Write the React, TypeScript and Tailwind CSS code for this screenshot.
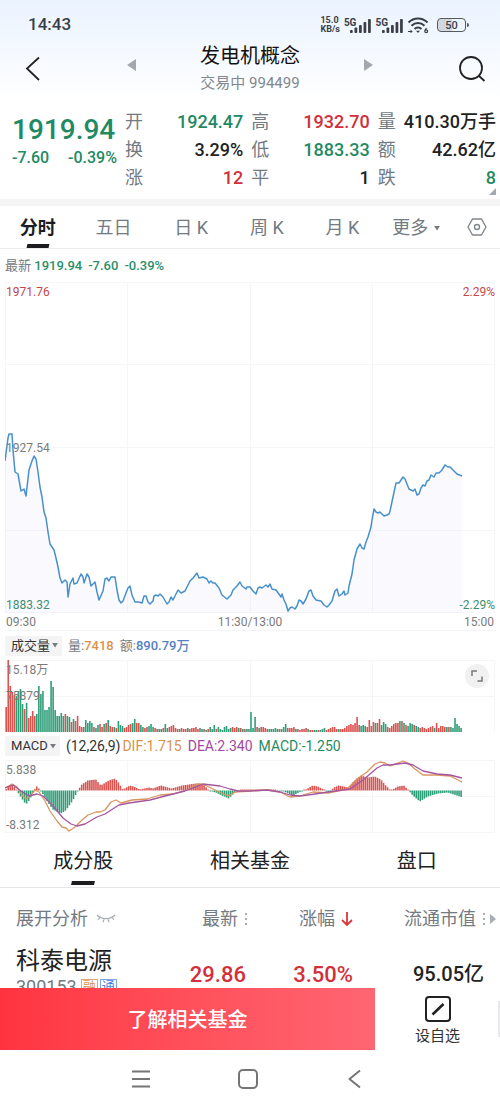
import { ReactNode } from 'react';

const RED = '#d9534f';
const GREEN = '#2f9e78';

const PRICE: [number, number][] = [
  [0, 179], [3, 156], [4, 152], [7, 152], [8, 168], [10, 190], [13, 192], [16, 209], [19, 207], [21, 214],
  [24, 188], [27, 179], [29, 174], [31, 177], [33, 190], [35, 205], [37, 215], [39, 230], [41, 236], [43, 250],
  [45, 262], [47, 265], [49, 268], [51, 276], [53, 285], [55, 296], [57, 301], [60, 298], [62, 300], [63, 315],
  [65, 302], [68, 296], [69, 302], [72, 301], [76, 292], [78, 295], [79, 301], [82, 292], [84, 295], [86, 304],
  [90, 300], [92, 310], [94, 318], [98, 309], [100, 297], [102, 296], [104, 299], [106, 295], [110, 295], [112, 308],
  [114, 318], [116, 321], [118, 319], [121, 311], [123, 306], [125, 304], [127, 313], [130, 320], [134, 320], [137, 321],
  [139, 314], [141, 314], [143, 320], [145, 322], [148, 319], [149, 314], [151, 313], [153, 314], [155, 312], [158, 315],
  [162, 322], [164, 320], [166, 315], [168, 318], [171, 312], [173, 308], [176, 311], [180, 309], [185, 299], [188, 296],
  [192, 291], [194, 296], [198, 295], [202, 297], [204, 301], [206, 299], [208, 301], [210, 301], [214, 306], [217, 313],
  [222, 317], [226, 313], [228, 308], [232, 304], [235, 300], [237, 304], [241, 307], [242, 305], [245, 305], [248, 309],
  [251, 312], [253, 306], [255, 305], [257, 306], [261, 303], [263, 305], [265, 302], [267, 307], [271, 308], [276, 315],
  [277, 312], [279, 318], [281, 322], [283, 329], [285, 326], [287, 325], [290, 327], [292, 324], [294, 318], [296, 319],
  [298, 322], [301, 317], [304, 309], [306, 308], [308, 314], [311, 318], [316, 319], [319, 323], [322, 325], [324, 323],
  [327, 319], [330, 309], [332, 307], [334, 314], [337, 312], [339, 309], [340, 313], [343, 311], [344, 304], [347, 292],
  [349, 278], [352, 267], [355, 262], [357, 266], [359, 267], [361, 260], [363, 255], [366, 245], [367, 238], [369, 227],
  [371, 230], [373, 231], [375, 230], [379, 234], [382, 233], [384, 232], [385, 229], [388, 215], [391, 201], [394, 201],
  [396, 198], [398, 195], [400, 197], [402, 202], [404, 207], [408, 209], [410, 207], [412, 213], [414, 212], [416, 206],
  [418, 203], [420, 204], [422, 199], [424, 198], [426, 193], [429, 195], [431, 191], [434, 191], [437, 188], [440, 183],
  [443, 185], [445, 185], [449, 189], [452, 192], [457, 194],
];

// one bar per minute, negative = falling (green)
const VOLUME = [
  25, 72, 46, 40, 37, -36, -41, -43, -28, 23, -29, 14, 16, 21, 16, -18, -46, -38, -41, -22,
  -22, -25, -51, -45, -22, -16, -16, -19, -16, 18, -16, -15, 10, -13, 11, 16, 6, 5, -5, -12,
  -9, -11, -9, 5, -4, -7, 8, 5, -8, 9, -12, 6, 5, -5, 4, -11, -7, -6, 4, 5,
  7, 8, -9, -13, 9, 9, -7, -5, 4, 5, -6, -8, -5, 4, 3, -3, -3, 4, -8, -4,
  5, 6, 7, 4, 3, -3, 4, 3, 3, -4, 3, 4, 4, 5, 3, -4, -3, 3, -2, 3,
  -5, -3, -7, 3, -5, -3, -2, -5, -6, -3, -4, 5, 4, 5, -4, 4, -3, 3, -3, -3,
  -20, -4, -15, 5, -4, 5, 5, 4, 3, -3, -3, -3, -4, -3, 3, -3, -5, -8, 4, 4,
  4, 5, -3, 3, 2, 3, 3, 4, -3, 2, 2, -2, -2, 2, -2, -3, -4, 2, 3, 4,
  5, 5, 3, -3, 3, 3, 4, 6, 7, 8, 7, 9, 15, 7, -6, -7, -6, 5, 12, 6,
  10, -9, 9, 13, -7, -10, -8, 5, 4, 6, 8, 9, 9, -11, 11, -9, 7, -6, -9, -8,
  7, -6, -5, 4, 5, 4, 3, 4, 5, 6, -4, 9, 4, 6, 6, 5, -5, 5, -5, -4,
  -14, -8, -6, -4,
];

const HISTOGRAM: [number, number][] = [
  [0, 1], [6, 7], [11, 0], [14, -5], [20, -14], [24, -9], [28, 0], [31, 4], [35, 0], [41, -10], [47, -19],
  [55, -23], [60, -20], [67, -10], [72, 0], [76, 6], [82, 10], [90, 11], [95, 5], [103, 10], [109, 12],
  [112, 9], [117, 1], [124, 5], [128, 4], [134, 1], [143, 3], [147, 2], [155, 5], [166, 2], [176, 5],
  [190, 7], [198, 6], [203, 0], [210, -2], [216, -5], [223, -8], [228, -3], [233, 0], [245, 1], [270, 0],
  [278, -1], [287, -5], [295, -1], [300, 1], [307, 5], [312, 4], [318, 1], [323, -2], [328, 3], [333, 5],
  [343, 3], [348, 9], [355, 15], [362, 13], [369, 14], [375, 11], [380, 5], [385, 0], [392, 4], [398, 5],
  [402, 1], [407, -5], [414, -11], [422, -6], [432, -3], [442, -2], [448, -4], [457, -7],
];

const DIF: [number, number][] = [
  [0, 28], [7, 24], [12, 27], [17, 35], [21, 39], [26, 35], [30, 30], [34, 32], [40, 41], [45, 51], [52, 61],
  [57, 67], [61, 68], [64, 71], [70, 67], [77, 60], [83, 55], [91, 52], [95, 52], [100, 50], [106, 42],
  [111, 40], [116, 43], [127, 40], [142, 39], [155, 35], [168, 34], [182, 30], [192, 24], [197, 24], [202, 26],
  [212, 31], [223, 36], [230, 32], [245, 31], [262, 30], [275, 32], [285, 37], [295, 36], [308, 32], [323, 33],
  [342, 29], [352, 19], [362, 12], [370, 4], [375, 2], [380, 3], [385, 6], [398, 1], [403, 3], [410, 9],
  [418, 15], [432, 15], [445, 16], [457, 22],
];

const DEA: [number, number][] = [
  [0, 28], [8, 25], [16, 31], [24, 36], [32, 34], [38, 36], [48, 46], [58, 58], [66, 64], [72, 66], [80, 64],
  [92, 57], [100, 54], [114, 45], [124, 43], [145, 40], [160, 36], [180, 31], [198, 24], [215, 26], [225, 29],
  [233, 31], [245, 31], [262, 30], [275, 32], [285, 35], [295, 36], [310, 34], [323, 32], [345, 29], [358, 20],
  [372, 8], [378, 5], [385, 5], [400, 3], [408, 5], [418, 11], [432, 14], [445, 15], [457, 18],
];

const toPoints = (data: [number, number][]) => data.map((p) => p.join(',')).join(' ');

function valueAt(data: [number, number][], x: number) {
  const i = data.findIndex((p) => p[0] >= x);
  if (i <= 0) return data[0][1];
  const [x0, y0] = data[i - 1];
  const [x1, y1] = data[i];
  return y0 + ((x - x0) / (x1 - x0)) * (y1 - y0);
}

function Chart({ height, rows, className, children }: { height: number; rows: number[]; className: string; children: ReactNode }) {
  return (
    <svg viewBox={`0 0 490 ${height}`} preserveAspectRatio="none" className={`block w-full ${className}`}>
      <g stroke="#f6f6f8" strokeWidth="1">
        {rows.map((y) => (
          <line key={y} x1="0" x2="490" y1={y} y2={y} />
        ))}
        {[0.5, 122.5, 245.5, 367.5, 489.5].map((x) => (
          <line key={x} x1={x} x2={x} y1="0" y2={height} />
        ))}
      </g>
      {children}
    </svg>
  );
}

function StatusBar() {
  return (
    <div className="flex h-11 items-center justify-between pt-1.5 pl-7 pr-[31px] text-[#3a3f47]">
      <span className="text-[17px] font-medium">14:43</span>
      <div className="flex items-center gap-1">
        <span className="text-[9px] leading-[9px] font-bold">
          15.0
          <br />
          KB/s
        </span>
        <Signal />
        <Signal />
        <svg width="22" height="17" viewBox="0 0 22 17" fill="none" stroke="currentColor" strokeWidth="2">
          <path d="M1.500 5.500C7 .2 15 .2 20.500 5.500" />
          <path d="M4.500 8.800c3.800-3.600 9.200-3.600 13 0" />
          <path d="M7.500 12c2-1.900 5-1.900 7 0" />
          <path d="M11 16l-2-2.300h4z" fill="currentColor" stroke="none" />
          <path d="M1 14.500h4M3.500 12.800l1.500 1.700-1.500 1.500" strokeWidth="1" />
          <path d="M19.500 11l-1.600 2.500" strokeWidth="1.200" />
          <circle cx="19.200" cy="14.300" r="1.400" strokeWidth="1.200" />
        </svg>
        <div className="ml-1 flex items-center gap-px">
          <div className="flex h-[14px] w-[29px] items-center justify-center rounded-[4px] border-[1.5px] border-[#555a61] bg-linear-to-r from-[#d3d8df] from-50% to-transparent to-50% text-[11px] leading-none font-medium">
            50
          </div>
          <div className="h-1 w-0.5 rounded-r bg-[#555a61]" />
        </div>
      </div>
    </div>
  );
}

function Signal() {
  return (
    <div className="flex items-end">
      <span className="self-start text-[10px] leading-[9px] font-bold">5G</span>
      <svg viewBox="0 0 20 15" preserveAspectRatio="none" fill="currentColor" className="-ml-1.5 h-[15px] w-[21px]">
        <rect x="0" y="12" width="2.600" height="3" rx=".8" />
        <rect x="4.300" y="9.500" width="2.600" height="5.500" rx=".8" />
        <rect x="8.600" y="7" width="2.600" height="8" rx=".8" />
        <rect x="12.900" y="4" width="2.600" height="11" rx=".8" />
        <rect x="17.200" y="1" width="2.600" height="14" rx=".8" />
      </svg>
    </div>
  );
}

function TitleBar() {
  return (
    <div className="grid grid-cols-[1fr_auto_1fr]">
      <div className="flex items-center justify-between pl-6 pr-16">
        <button aria-label="返回">
          <svg width="18" height="26" viewBox="0 0 18 26" fill="none" stroke="#222" strokeWidth="1.800">
            <path d="M15 1.500L3 12.500l12 11.500" />
          </svg>
        </button>
        <button aria-label="上一个" className="mb-2">
          <svg width="9" height="12" viewBox="0 0 9 12" fill="#a3a8ae">
            <path d="M9 0v12L0 6z" />
          </svg>
        </button>
      </div>
      <div className="text-center">
        <h1 className="text-xl leading-6 text-[#111]">发电机概念</h1>
        <p className="mt-1 text-[15px] leading-[22px] text-[#81878f]">交易中 994499</p>
      </div>
      <div className="flex items-center justify-between pr-3.5 pl-16">
        <button aria-label="下一个" className="mb-2">
          <svg width="9" height="12" viewBox="0 0 9 12" fill="#a3a8ae">
            <path d="M0 0v12l9-6z" />
          </svg>
        </button>
        <button aria-label="搜索">
          <svg width="28" height="28" viewBox="0 0 28 28" fill="none" stroke="#222" strokeWidth="1.800">
            <circle cx="13" cy="13" r="11" />
            <path d="M20.500 20.500l6 5.500" />
          </svg>
        </button>
      </div>
    </div>
  );
}

const QUOTES = [
  { label: '开', value: '1924.47', color: 'text-[#1f8a63]' },
  { label: '高', value: '1932.70', color: 'text-[#d32f3a]' },
  { label: '量', value: '410.30万手', color: 'text-[#222]' },
  { label: '换', value: '3.29%', color: 'text-[#222]' },
  { label: '低', value: '1883.33', color: 'text-[#1f8a63]' },
  { label: '额', value: '42.62亿', color: 'text-[#222]' },
  { label: '涨', value: '12', color: 'text-[#d32f3a]' },
  { label: '平', value: '1', color: 'text-[#222]' },
  { label: '跌', value: '8', color: 'text-[#1f8a63]' },
];

function Quote() {
  return (
    <section className="relative flex gap-2 pt-3.5 pr-1 pb-[7px] pl-3">
      <div className="w-[105px] shrink-0 pt-1.5 font-medium text-[#1f8a63]">
        <p className="text-[28px] leading-8">1919.94</p>
        <p className="flex justify-between leading-6">
          <span>-7.60</span>
          <span>-0.39%</span>
        </p>
      </div>
      <dl className="grid flex-1 grid-cols-3 gap-x-2 text-lg leading-7">
        {QUOTES.map((q) => (
          <div key={q.label} className="flex justify-between whitespace-nowrap">
            <dt className="text-[#737a82]">{q.label}</dt>
            <dd className={`font-medium ${q.color}`}>{q.value}</dd>
          </div>
        ))}
      </dl>
      <svg width="7" height="7" viewBox="0 0 7 7" fill="#a3a8ae" className="absolute right-1 bottom-1">
        <path d="M7 0v7H0z" />
      </svg>
    </section>
  );
}

function Caret() {
  return (
    <svg width="6" height="5" viewBox="0 0 7 6" fill="#777c82">
      <path d="M0 0h7L3.500 5.500z" />
    </svg>
  );
}

function PeriodTabs() {
  return (
    <nav className="flex h-[43px] border-b border-[#ececee] text-lg text-[#737a82]">
      <div className="grid flex-1 grid-cols-6">
        <button className="relative pt-0.5 font-bold text-[#1d1d1f]">
          分时
          <span className="absolute bottom-0 left-1/2 h-1 w-[22px] -translate-x-1/2 -skew-x-12 bg-[#1d1d1f]" />
        </button>
        <button className="pt-0.5">五日</button>
        <button className="pt-0.5 pl-1">日 K</button>
        <button className="pt-0.5 pl-1">周 K</button>
        <button className="pt-0.5 pl-1">月 K</button>
        <button className="flex items-center justify-center gap-1.5 pt-0.5 whitespace-nowrap">
          更多 <Caret />
        </button>
      </div>
      <button aria-label="设置" className="flex w-[46px] items-center justify-center">
        <svg width="20" height="18" viewBox="0 0 20 18" fill="none" stroke="#81878f" strokeWidth="1.400">
          <path d="M5.500 1h9L19 9l-4.500 8h-9L1 9z" strokeLinejoin="round" />
          <circle cx="10" cy="9" r="2.500" />
        </svg>
      </button>
    </nav>
  );
}

function PricePanel() {
  return (
    <section className="px-[5px]">
      <p className="flex h-[33px] items-center gap-1.5 pt-px text-[13px] font-medium text-[#2b8f6b]">
        <span>
          <span className="font-normal text-[#737a82]">最新</span> 1919.94
        </span>
        <span>-7.60</span>
        <span>-0.39%</span>
      </p>
      <div className="relative text-xs leading-4">
        <Chart height={331} rows={[0.5, 82.5, 165.5, 248.5, 330.5]} className="h-[331px]">
          <polygon points={`0,331 ${toPoints(PRICE)} 457,331`} fill="#7f7ff0" fillOpacity="0.035" />
          <polyline points={toPoints(PRICE)} fill="none" stroke="#4890cc" strokeWidth="1.500" strokeLinejoin="round" />
        </Chart>
        <span className="absolute top-0.5 left-px text-[#c4474b]">1971.76</span>
        <span className="absolute top-0.5 right-0 text-[#c4474b]">2.29%</span>
        <span className="absolute top-1/2 left-px -translate-y-1/2 text-[#7b7b7b]">1927.54</span>
        <span className="absolute bottom-0 left-px text-[#3c8f6f]">1883.32</span>
        <span className="absolute right-0 bottom-0 text-[#3c8f6f]">-2.29%</span>
      </div>
      <div className="flex h-[18px] items-center justify-between border-b border-[#f4f4f6] px-px text-xs text-[#7b7b7b]">
        <span>09:30</span>
        <span>11:30/13:00</span>
        <span>15:00</span>
      </div>
    </section>
  );
}

function VolumePanel() {
  return (
    <section className="px-[5px]">
      <div className="flex h-[29px] items-center gap-1.5 text-[13px] text-[#737a82]">
        <button className="flex h-5 items-center gap-0.5 rounded-xs bg-[#f4f4f5] pr-1 pl-1.5 text-[#333]">
          成交量 <Caret />
        </button>
        <span>
          量:<span className="font-medium text-[#d9924e]">7418</span>
        </span>
        <span>
          额:<span className="font-medium text-[#5580c4]">890.79万</span>
        </span>
      </div>
      <div className="relative text-xs leading-4 text-[#7b7b7b]">
        <Chart height={72} rows={[0.5, 36.5]} className="h-[72px]">
          {VOLUME.map((v, i) => (
            <rect key={i} x={0.4 + i * 2.04} y={72 - Math.abs(v)} width="1.600" height={Math.abs(v)} fill={v > 0 ? RED : GREEN} />
          ))}
        </Chart>
        <span className="absolute top-0.5 left-px">15.18万</span>
        <span className="absolute top-1/2 left-px -translate-y-1/2">75879</span>
        <button aria-label="全屏" className="absolute top-1 right-1.5 flex h-6 w-6 items-center justify-center rounded-full bg-[#f1f1f2]">
          <svg width="12" height="12" viewBox="0 0 12 12" fill="none" stroke="#777" strokeWidth="1.500">
            <path d="M1 6V1h5M11 6.500V11H6.500" />
          </svg>
        </button>
      </div>
    </section>
  );
}

function MacdPanel() {
  return (
    <section className="px-[5px]">
      <div className="flex h-7 items-center gap-1.5 text-sm whitespace-nowrap">
        <button className="flex h-5 items-center gap-0.5 rounded-xs bg-[#f4f4f5] pr-1 pl-1.5 text-[13px] text-[#333]">
          MACD <Caret />
        </button>
        <span className="text-[#333]">(12,26,9)</span>
        <span className="-ml-1 text-[#d9924e]">DIF:1.715</span>
        <span className="text-[#a3489f]">DEA:2.340</span>
        <span className="text-[#1f8a63]">MACD:-1.250</span>
      </div>
      <div className="relative text-xs leading-4 text-[#7b7b7b]">
        <Chart height={73} rows={[0.5, 36.5, 72.5]} className="h-[73px]">
          {VOLUME.map((_, i) => {
            const x = 0.4 + i * 2.04;
            const v = valueAt(HISTOGRAM, x);
            const h = Math.max(Math.abs(v), 1);
            return <rect key={i} x={x} y={v > 0 ? 30.5 - h : 30.5} width="1.600" height={h} fill={v > 0 ? RED : GREEN} />;
          })}
          <polyline points={toPoints(DIF)} fill="none" stroke="#d99560" strokeWidth="1.300" strokeLinejoin="round" />
          <polyline points={toPoints(DEA)} fill="none" stroke="#a5569f" strokeWidth="1.300" strokeLinejoin="round" />
        </Chart>
        <span className="absolute top-0.5 left-px">5.838</span>
        <span className="absolute bottom-0 left-px">-8.312</span>
      </div>
    </section>
  );
}

function SortDots() {
  return (
    <svg width="4" height="14" viewBox="0 0 4 14" fill="#a9aeb4">
      <rect x="1" y="1" width="2" height="2" />
      <rect x="1" y="6" width="2" height="2" />
      <rect x="1" y="11" width="2" height="2" />
    </svg>
  );
}

function Constituents() {
  return (
    <section>
      <nav className="grid h-[55px] grid-cols-3 border-b border-[#e6e6e8] text-xl text-[#222]">
        <button className="relative pt-0.5">
          成分股
          <span className="absolute bottom-0.5 left-1/2 h-1 w-[23px] -translate-x-1/2 -skew-x-12 bg-[#1d1d1f]" />
        </button>
        <button className="pt-0.5">相关基金</button>
        <button className="pt-0.5">盘口</button>
      </nav>
      <table className="w-full table-fixed whitespace-nowrap">
        <colgroup>
          <col className="w-[32%]" />
          <col className="w-[18%]" />
          <col className="w-[21%]" />
          <col className="w-[29%]" />
        </colgroup>
        <thead>
          <tr className="h-[61px] text-lg text-[#737a82]">
            <th className="pl-4 font-normal">
              <button className="flex items-center gap-2">
                展开分析
                <svg width="20" height="9" viewBox="0 0 20 9" fill="none" stroke="#a9aeb4" strokeWidth="1.200">
                  <path d="M1 1c4.500 4.800 13.500 4.800 18 0M4 3.500L2 6M8 5l-1 3.200M12 5l1 3.200M16 3.500L18 6" />
                </svg>
              </button>
            </th>
            <th className="pr-0.5 font-normal">
              <button className="ml-auto flex items-center gap-1.5">
                最新 <SortDots />
              </button>
            </th>
            <th className="pr-0.5 font-normal">
              <button className="ml-auto flex items-center gap-1.5">
                涨幅
                <svg width="12" height="14" viewBox="0 0 12 14" fill="none" stroke="#d9363e" strokeWidth="1.800">
                  <path d="M6 0v12.500M1 8l5 5 5-5" />
                </svg>
              </button>
            </th>
            <th className="pr-1 font-normal">
              <button className="ml-auto flex items-center gap-1.5">
                流通市值
                <span className="flex items-center gap-1">
                  <SortDots />
                  <svg width="6" height="10" viewBox="0 0 6 10" fill="#a9aeb4">
                    <path d="M0 0v10l6-5z" />
                  </svg>
                </span>
              </button>
            </th>
          </tr>
        </thead>
        <tbody>
          <tr className="text-right font-medium">
            <td className="pl-4 text-left font-normal">
              <p className="text-2xl leading-6 text-[#222]">科泰电源</p>
              <p className="mt-0.5 flex items-center gap-0.5 text-lg leading-6 text-[#737a82]">
                300153
                <span className="ml-0.5 border border-[#e0a878] px-px text-[13px] leading-[14px] text-[#d9924e]">融</span>
                <span className="border border-[#7aa5e6] px-px text-[13px] leading-[14px] text-[#3f7fe0]">通</span>
              </p>
            </td>
            <td className="pr-1 text-[22px] text-[#d32f3a]">29.86</td>
            <td className="pr-0.5 text-[22px] text-[#d32f3a]">3.50%</td>
            <td className="pr-4 text-xl text-[#222]">95.05亿</td>
          </tr>
        </tbody>
      </table>
    </section>
  );
}

function BottomBar() {
  return (
    <footer className="shrink-0 bg-white">
      <div className="flex h-[62px] items-center">
        <button className="h-full w-3/4 bg-linear-to-r from-[#ff3340] to-[#ff6572] pt-0.5 text-xl font-medium text-white">了解相关基金</button>
        <button className="flex flex-1 flex-col items-center gap-1 pt-1 text-[15px] leading-5 text-[#333]">
          <svg width="26" height="26" viewBox="0 0 26 26" fill="none" stroke="#222" strokeWidth="2">
            <rect x="1" y="1" width="24" height="24" rx="3" />
            <path d="M7.500 18.500l11-10.500" strokeWidth="2.600" />
          </svg>
          设自选
        </button>
        <div className="-ml-0.5 h-9 w-0.5 bg-[#e9e9eb]" />
      </div>
      <div className="flex h-[61px] items-center justify-center gap-[86px] pr-1 pb-1 text-[#757575]">
        <button aria-label="最近任务">
          <svg width="20" height="20" viewBox="0 0 20 20" stroke="currentColor" strokeWidth="2">
            <path d="M1 2.500h18M1 10h18M1 17.500h18" />
          </svg>
        </button>
        <button aria-label="主屏幕">
          <svg width="22" height="20" viewBox="0 0 22 20" fill="none" stroke="currentColor" strokeWidth="2">
            <rect x="2" y="1" width="18" height="18" rx="4" />
          </svg>
        </button>
        <button aria-label="返回上一页">
          <svg width="20" height="20" viewBox="0 0 20 20" fill="none" stroke="currentColor" strokeWidth="2">
            <path d="M15 1.500L4.500 10 15 18.500" strokeLinejoin="round" />
          </svg>
        </button>
      </div>
    </footer>
  );
}

export default function App() {
  return (
    <div className="flex h-screen flex-col bg-white font-[Roboto,'Noto_Sans_CJK_SC',sans-serif]">
      <main className="min-h-0 flex-1 overflow-y-auto [scrollbar-width:none]">
        <header className="bg-linear-to-b from-[#eaf3ff] to-white to-50%">
          <StatusBar />
          <TitleBar />
          <Quote />
        </header>
        <div className="h-[7px] bg-[#f4f4f5]" />
        <PeriodTabs />
        <PricePanel />
        <VolumePanel />
        <MacdPanel />
        <Constituents />
      </main>
      <BottomBar />
    </div>
  );
}
